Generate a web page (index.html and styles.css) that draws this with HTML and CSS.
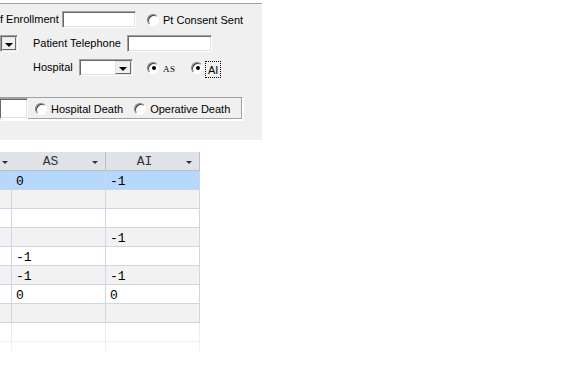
FILE: index.html
```html
<!DOCTYPE html>
<html lang="en">
<head>
  <meta charset="UTF-8">
  <title>Patient form</title>
  <link rel="stylesheet" href="styles.css">
</head>
<body>
  <div class="panel">
    <div class="row">
      <span class="lbl w-enroll">f Enrollment</span>
      <span class="edit w-date"></span>
      <label class="radio gap-11"><span class="circle"></span>Pt Consent Sent</label>
    </div>
    <div class="row">
      <span class="combo w-frag"><span class="drop"></span></span>
      <span class="lbl w-phone gap-15">Patient Telephone</span>
      <span class="edit w-phone-box"></span>
    </div>
    <div class="row">
      <span class="lbl w-hosp gap-33">Hospital</span>
      <span class="combo w-hosp-box"><span class="drop"></span></span>
      <label class="radio gap-14 w-as"><span class="circle on"></span><span class="small">AS</span></label>
      <label class="radio"><span class="circle on"></span><span class="focus">AI</span></label>
    </div>
    <div class="frame">
      <span class="edit w-frame-box"></span>
      <label class="radio gap-7"><span class="circle"></span>Hospital Death</label>
      <label class="radio gap-11"><span class="circle"></span>Operative Death</label>
    </div>
  </div>

  <div class="grid">
    <div class="head"><span class="arrow"></span></div>
    <div class="head">AS<span class="arrow"></span></div>
    <div class="head">AI<span class="arrow"></span></div>

    <div class="cell sel"></div><div class="cell sel">0</div><div class="cell sel">-1</div>
    <div class="cell alt"></div><div class="cell alt"></div><div class="cell alt"></div>
    <div class="cell"></div><div class="cell"></div><div class="cell"></div>
    <div class="cell alt"></div><div class="cell alt"></div><div class="cell alt">-1</div>
    <div class="cell"></div><div class="cell">-1</div><div class="cell"></div>
    <div class="cell alt"></div><div class="cell alt">-1</div><div class="cell alt">-1</div>
    <div class="cell"></div><div class="cell">0</div><div class="cell">0</div>
    <div class="cell alt"></div><div class="cell alt"></div><div class="cell alt"></div>
    <div class="cell faint"></div><div class="cell faint"></div><div class="cell faint"></div>
    <div class="cell tail"></div><div class="cell tail"></div><div class="cell tail"></div>
  </div>
</body>
</html>
```

FILE: styles.css
```css
body {
  margin: 0;
  background: #fff;
  font-family: "Liberation Sans", Arial, sans-serif;
  font-size: 11px;
  color: #000;
}

/* panneau du formulaire */
.panel {
  width: 262px;
  height: 129px;
  margin-top: 3px;
  border-top: 1px solid #a0a0a0;
  background: #f0f0f0;
  padding-top: 7px;
  box-sizing: content-box;
  overflow: hidden;
}

.row {
  display: flex;
  align-items: center;
  height: 17px;
  margin-bottom: 7px;
  white-space: nowrap;
}

.lbl {
  display: inline-block;
  line-height: 13px;
}

.w-enroll { width: 62px; }
.w-phone { width: 94px; }
.w-hosp { width: 46px; }

.gap-7 { margin-left: 7px; }
.gap-11 { margin-left: 11px; }
.gap-14 { margin-left: 14px; }
.gap-15 { margin-left: 15px; }
.gap-33 { margin-left: 33px; }

.edit,
.combo {
  display: inline-block;
  height: 17px;
  box-sizing: border-box;
  background: #fff;
  border: 1px solid;
  border-color: #a0a0a0 #fff #fff #a0a0a0;
  box-shadow: inset 1px 1px #696969, inset -1px -1px #e3e3e3;
}

.w-date { width: 74px; }
.w-phone-box { width: 85px; }
.w-frame-box { width: 29px; height: 21px; margin-left: -2px; }

.combo {
  display: flex;
  justify-content: flex-end;
  padding: 1px;
}

.w-frag { width: 18px; }
.w-hosp-box { width: 54px; }

.drop {
  width: 16px;
  height: 13px;
  box-sizing: border-box;
  background: #f0f0f0;
  border: 1px solid;
  border-color: #e3e3e3 #696969 #696969 #e3e3e3;
  display: flex;
  align-items: flex-end;
  justify-content: center;
  padding-bottom: 2px;
}

.drop::after {
  content: "";
  border-left: 4px solid transparent;
  border-right: 4px solid transparent;
  border-top: 4px solid #000;
}

.radio {
  display: inline-flex;
  align-items: center;
  gap: 4px;
}

.w-as { width: 44px; }

.circle {
  width: 12px;
  height: 12px;
  box-sizing: border-box;
  border-radius: 50%;
  background: #fff;
  border: 1px solid;
  border-color: #808080 #fff #fff #808080;
  box-shadow: inset 1px 1px #404040;
  display: flex;
  align-items: center;
  justify-content: center;
}

.circle.on::after {
  content: "";
  width: 4px;
  height: 4px;
  border-radius: 50%;
  background: #000;
  margin: 1px 0 0 1px;
}

.small {
  font-family: "Liberation Serif", serif;
  font-size: 9px;
  letter-spacing: 0.5px;
  margin-top: 2px;
}

.focus {
  border: 1px dotted #000;
  padding: 2px 2px 0 2px;
  line-height: 13px;
  margin-left: -2px;
  margin-top: 3px;
}

.frame {
  display: flex;
  align-items: center;
  width: 243px;
  height: 23px;
  margin-top: 21px;
  box-sizing: border-box;
  border: 1px solid;
  border-color: #a0a0a0 #fff #fff #a0a0a0;
  box-shadow: inset -1px -1px #a0a0a0, 1px 1px #fff;
  white-space: nowrap;
}

/* grille */
.grid {
  display: grid;
  grid-template-columns: 12px 94px 94px;
  width: 200px;
  margin-top: 12px;
  font-family: "Liberation Mono", "Courier New", monospace;
  font-size: 13px;
}

.head {
  position: relative;
  height: 19px;
  box-sizing: border-box;
  background: #dfe2e6;
  border-right: 1px solid #b8c0ca;
  border-bottom: 1px solid #b8c0ca;
  color: #333;
  line-height: 19px;
  padding-right: 16px;
  text-align: center;
}

.arrow {
  position: absolute;
  right: 7px;
  top: 9px;
  border-left: 3px solid transparent;
  border-right: 3px solid transparent;
  border-top: 3px solid #333;
}

.head:first-child .arrow { right: 8px; }

.cell {
  height: 19px;
  box-sizing: border-box;
  border-right: 1px solid #cdd7e4;
  border-bottom: 1px solid #cdd7e4;
  padding-left: 4px;
  line-height: 21px;
  background: #fff;
}

.cell.alt { background: #f2f2f2; }
.cell.sel { background: #b5d8fc; }

.cell.faint {
  border-right-color: #e8edf3;
  border-bottom-color: #eef1f5;
}

.cell.tail {
  height: 9px;
  border-bottom: none;
  border-right-color: #eef1f5;
}
```
